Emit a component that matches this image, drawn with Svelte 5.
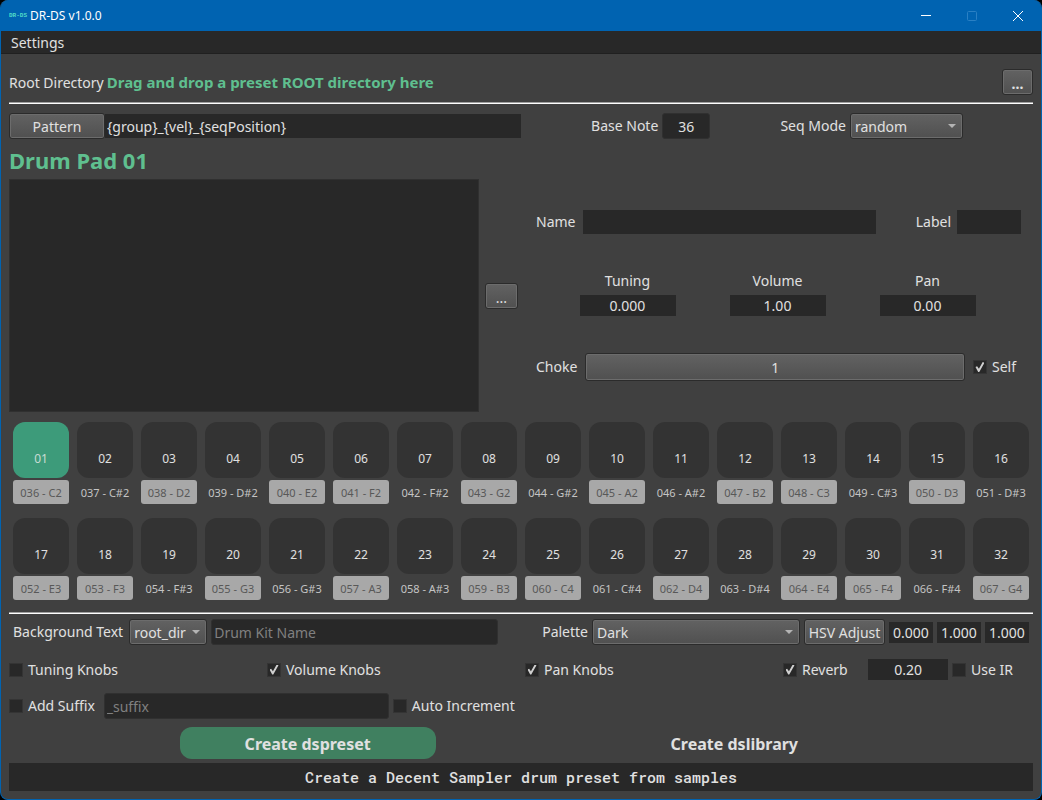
<script>
  const names = ['C', 'C#', 'D', 'D#', 'E', 'F', 'F#', 'G', 'G#', 'A', 'A#', 'B'];
  const baseNote = 36;

  // One entry per drum pad, numbered from the base note upwards
  const pads = Array.from({ length: 32 }, (_, i) => {
    const note = baseNote + i;
    const name = names[note % 12];
    return {
      id: String(i + 1).padStart(2, '0'),
      note: `${String(note).padStart(3, '0')} - ${name}${Math.floor(note / 12) - 1}`,
      natural: !name.includes('#')
    };
  });

  let selected = $state('01');
  let pattern = $state('{group}_{vel}_{seqPosition}');
</script>

<div class="window">
  <header class="titlebar">
    <span class="logo">DR-DS</span>
    <span class="title">DR-DS v1.0.0</span>
    <div class="winbuttons">
      <button aria-label="Minimize"><svg viewBox="0 0 10 10"><path d="M0 4.5H10" /></svg></button>
      <button aria-label="Maximize" disabled><svg viewBox="0 0 10 10"><rect x="0.5" y="0.5" width="9" height="9" rx="1" /></svg></button>
      <button aria-label="Close"><svg viewBox="0 0 10 10"><path d="M0 0L10 10M10 0L0 10" /></svg></button>
    </div>
  </header>
  <nav class="menubar"><button>Settings</button></nav>

  <main>
    <section class="root">
      <span>Root Directory</span>
      <strong>Drag and drop a preset ROOT directory here</strong>
      <button class="btn browse bold" aria-label="Browse root directory">...</button>
    </section>
    <hr />

    <section class="halves pattern">
      <div class="joined">
        <button class="btn patternbtn">Pattern</button>
        <input class="field" aria-label="Pattern" bind:value={pattern} />
      </div>
      <div class="spread">
        <label class="pair">Base Note <input class="field round base" value={baseNote} /></label>
        <label class="pair">Seq Mode
          <span class="select seq"><select><option>random</option><option>round_robin</option><option>always</option></select></span>
        </label>
      </div>
    </section>

    <h1>Drum Pad {selected}</h1>

    <section class="halves editor">
      <div class="samples">
        <div class="drop"></div>
        <button class="btn browse" aria-label="Browse samples">...</button>
      </div>
      <div class="params">
        <div class="line">
          <label class="name">Name <input class="field" /></label>
          <label class="tag">Label <input class="field" /></label>
        </div>
        <div class="knobs">
          <label>Tuning <input class="field num" value="0.000" /></label>
          <label>Volume <input class="field num" value="1.00" /></label>
          <label>Pan <input class="field num" value="0.00" /></label>
        </div>
        <div class="line choke">
          <span>Choke</span>
          <button class="btn">1</button>
          <label class="check"><input type="checkbox" checked />Self</label>
        </div>
      </div>
    </section>

    <section class="pads">
      {#each pads as pad (pad.id)}
        <div class="pad">
          <button class:active={selected === pad.id} onclick={() => (selected = pad.id)}>{pad.id}</button>
          <span class:natural={pad.natural}>{pad.note}</span>
        </div>
      {/each}
    </section>
    <hr />

    <section class="look">
      <div class="group text">
        <label class="pair">Background Text
          <span class="select"><select><option>root_dir</option><option>custom</option></select></span>
        </label>
        <input class="field round" aria-label="Drum kit name" placeholder="Drum Kit Name" />
      </div>
      <div class="group palette">
        <label class="pair">Palette
          <span class="select"><select><option>Dark</option><option>Light</option></select></span>
        </label>
        <button class="btn hsv">HSV Adjust</button>
        <input class="field num" aria-label="Hue" value="0.000" />
        <input class="field num" aria-label="Saturation" value="1.000" />
        <input class="field num" aria-label="Value" value="1.000" />
      </div>
    </section>

    <section class="options">
      <label class="check"><input type="checkbox" />Tuning Knobs</label>
      <label class="check"><input type="checkbox" checked />Volume Knobs</label>
      <label class="check"><input type="checkbox" checked />Pan Knobs</label>
      <div class="reverb">
        <label class="check"><input type="checkbox" checked />Reverb</label>
        <input class="field num" aria-label="Reverb amount" value="0.20" />
        <label class="check"><input type="checkbox" />Use IR</label>
      </div>
    </section>

    <section class="suffix">
      <label class="check"><input type="checkbox" />Add Suffix</label>
      <input class="field round" aria-label="Suffix" placeholder="_suffix" />
      <label class="check"><input type="checkbox" />Auto Increment</label>
    </section>

    <section class="actions">
      <button class="primary">Create dspreset</button>
      <button>Create dslibrary</button>
    </section>
    <footer>Create a Decent Sampler drum preset from samples</footer>
  </main>
</div>

<style>
  :global(body) {
    background: #000;
  }
  * {
    box-sizing: border-box;
  }
  .window {
    min-height: 100vh;
    display: flex;
    flex-direction: column;
    border: 1px solid #0063b1;
    border-top: 0;
    border-radius: 8px;
    overflow: hidden;
    background: #404040;
    color: #e0e0e0;
    font: 14px/20px 'Noto Sans', sans-serif;
  }
  button,
  input,
  select {
    font: inherit;
    color: inherit;
    margin: 0;
    border: 0;
    padding: 0;
    background: none;
  }
  label {
    white-space: nowrap;
  }

  .titlebar {
    height: 31px;
    display: flex;
    align-items: center;
    background: #0063b1;
    color: #fff;
    font-size: 12px;
    padding-left: 8px;
  }
  .logo {
    width: 18px;
    color: #50dcc8;
    font: 6px/12px 'Liberation Mono', monospace;
    font-weight: 700;
    white-space: nowrap;
    margin-right: 3px;
  }
  .winbuttons {
    margin-left: auto;
    display: flex;
  }
  .winbuttons button {
    width: 46px;
    height: 31px;
    display: grid;
    place-items: center;
  }
  .winbuttons svg {
    width: 10px;
    height: 10px;
    fill: none;
    stroke: #fff;
    overflow: visible;
  }
  .winbuttons button:disabled svg {
    stroke: #2a80c4;
  }
  .menubar {
    height: 23px;
    background: #282828;
    border-bottom: 1px solid #202020;
    padding: 2px 0 0 10px;
    display: flex;
    align-items: center;
  }

  main {
    flex: 1;
    display: flex;
    flex-direction: column;
    padding: 15px 8px 8px;
  }
  hr {
    width: 100%;
    height: 2px;
    margin: 0;
    border: 0;
    border-top: 1px solid #a0a0a0;
    background: #fff;
  }

  .field {
    background: #282828;
    height: 24px;
    min-width: 0;
    padding: 0 2px;
  }
  .field.round {
    height: 26px;
    border: 1px solid #303030;
    border-radius: 3px;
  }
  .field::placeholder {
    color: #808080;
    opacity: 1;
  }
  .num {
    height: 21px;
    text-align: center;
    padding: 0;
  }
  .btn,
  select {
    height: 26px;
    border: 1px solid #2b2b2b;
    border-radius: 3px;
    padding-top: 2px;
    background: linear-gradient(#626262, #505050);
    box-shadow: inset 0 0 0 1px #6c6c6c;
  }
  select {
    appearance: none;
    width: 100%;
    padding: 2px 4px 0;
  }
  .select {
    display: block;
    position: relative;
  }
  .select::after {
    content: '';
    position: absolute;
    right: 7px;
    top: 11px;
    border: 4px solid transparent;
    border-top-color: #b4b4b4;
    border-bottom: 0;
    pointer-events: none;
  }
  .pair {
    display: flex;
    align-items: center;
    gap: 4px;
  }
  .check {
    display: flex;
    align-items: center;
    gap: 5px;
  }
  .check input {
    appearance: none;
    flex: none;
    width: 14px;
    height: 14px;
    background: #282828;
    border: 1px solid #343434;
    display: grid;
    place-items: center;
  }
  .check input:checked::before {
    content: '';
    width: 9px;
    height: 10px;
    background: #d0d0d0;
    clip-path: polygon(0 50%, 18% 42%, 38% 68%, 80% 0, 100% 8%, 42% 100%, 30% 100%);
  }

  .root {
    display: flex;
    align-items: center;
    gap: 3px;
    height: 26px;
  }
  .root span {
    padding-top: 2px;
  }
  .root strong {
    font-size: 15px;
  }
  .root strong,
  h1 {
    color: #5fbf8f;
  }
  .browse {
    width: 33px;
    line-height: 24px;
  }
  .root .browse {
    width: 31px;
    margin-left: auto;
  }
  .bold {
    font-weight: 700;
  }
  .root + hr {
    margin: 7px 0 9px;
  }

  .halves {
    display: grid;
    grid-template-columns: minmax(0, 1fr) minmax(0, 1fr);
  }
  .pattern {
    align-items: center;
  }
  .joined {
    display: flex;
    align-items: center;
  }
  .joined .field {
    flex: 1;
  }
  .patternbtn {
    width: 96px;
  }
  .spread {
    display: flex;
    justify-content: space-evenly;
  }
  .base {
    width: 48px;
    text-align: center;
  }
  .seq {
    width: 113px;
  }
  h1 {
    margin: 8px 0 6px;
    font-size: 22px;
    line-height: 26px;
  }

  .samples {
    display: flex;
    align-items: center;
    gap: 6px;
    padding-right: 3px;
  }
  .drop {
    flex: 1;
    height: 233px;
    background: #282828;
    border: 1px solid #303030;
  }
  .params {
    display: flex;
    flex-direction: column;
    justify-content: center;
    gap: 37px;
    padding: 0 12px 0 15px;
  }
  .line {
    display: flex;
    align-items: center;
    justify-content: space-between;
    gap: 8px;
  }
  .line label {
    display: flex;
    align-items: center;
  }
  .name {
    gap: 8px;
    flex: 1;
    margin-right: 32px;
  }
  .name .field {
    flex: 1;
  }
  .tag {
    gap: 6px;
  }
  .tag .field {
    width: 64px;
  }
  .knobs {
    display: flex;
    justify-content: center;
    gap: 54px;
    padding-right: 2px;
  }
  .knobs label {
    display: grid;
    justify-items: center;
    gap: 4px;
  }
  .knobs .field {
    width: 96px;
  }
  .choke .btn {
    flex: 1;
    height: 28px;
  }
  .choke .check {
    padding-right: 5px;
  }

  .pads {
    display: grid;
    grid-template-columns: repeat(16, minmax(0, 1fr));
    gap: 14px 8px;
    padding: 10px 4px 12px;
  }
  .pad {
    display: grid;
    gap: 2px;
  }
  .pad button {
    height: 56px;
    border-radius: 12px;
    background: #333;
    font-size: 12px;
    padding-top: 18px;
  }
  .pad button.active {
    background: #3d9b7a;
    color: #c8dcd4;
  }
  .pad span {
    height: 24px;
    border-radius: 3px;
    font-size: 11px;
    line-height: 26px;
    text-align: center;
    white-space: nowrap;
    color: #c4c4c4;
  }
  .pad .natural {
    background: #a8a8a8;
    color: #585858;
  }

  .look {
    display: flex;
    justify-content: space-between;
    gap: 44px;
    padding: 5px 4px 0;
  }
  .group {
    display: flex;
    align-items: center;
    gap: 4px;
  }
  .text {
    flex: 1;
  }
  .text .pair {
    gap: 6px;
  }
  .text .select {
    width: 78px;
  }
  .text .field {
    flex: 1;
  }
  .palette .select {
    width: 208px;
  }
  .palette .num {
    width: 44px;
  }
  .hsv {
    width: 81px;
  }
  .options {
    display: grid;
    grid-template-columns: repeat(4, minmax(0, 1fr));
    gap: 8px;
    margin: 14px 0 13px;
  }
  .reverb {
    display: flex;
    align-items: center;
    gap: 4px;
  }
  .reverb .num {
    width: 80px;
    margin-left: auto;
  }
  .reverb .check:last-child {
    margin-right: 20px;
  }
  .suffix {
    display: flex;
    align-items: center;
    gap: 4px;
  }
  .suffix .field {
    width: 285px;
    margin-left: 5px;
  }

  .actions {
    display: flex;
    justify-content: space-evenly;
    margin: 8px 0 4px;
  }
  .actions button {
    width: 256px;
    height: 32px;
    border-radius: 12px;
    padding-top: 2px;
    font-size: 16px;
    font-weight: 700;
  }
  .actions .primary {
    background: #408060;
  }
  footer {
    background: #282828;
    text-align: center;
    font: 500 15px/28px 'Roboto Mono', 'DejaVu Sans Mono', monospace;
  }
</style>
